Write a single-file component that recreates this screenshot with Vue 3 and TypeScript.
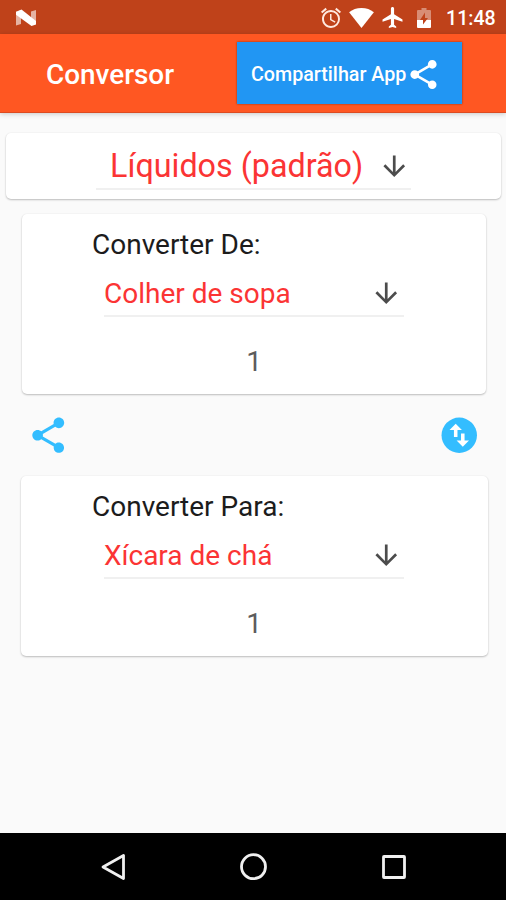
<script setup lang="ts">
import { ref } from 'vue'

interface Panel {
  id: string
  label: string
  unit: string
  value: string
}

const title = 'Conversor'
const category = 'Líquidos (padrão)'
const source = ref<Panel>({ id: 'from', label: 'Converter De:', unit: 'Colher de sopa', value: '1' })
const target = ref<Panel>({ id: 'to', label: 'Converter Para:', unit: 'Xícara de chá', value: '1' })

const sharePath =
  'M18 16.08c-.76 0-1.44.3-1.96.77L8.91 12.7c.05-.23.09-.46.09-.7s-.04-.47-.09-.7l7.05-4.11c.54.5 1.25.81 2.04.81 1.66 0 3-1.34 3-3s-1.34-3-3-3-3 1.34-3 3c0 .24.04.47.09.7L8.04 9.81C7.5 9.31 6.79 9 6 9c-1.66 0-3 1.34-3 3s1.34 3 3 3c.79 0 1.5-.31 2.04-.81l7.12 4.16c-.05.21-.08.43-.08.65 0 1.61 1.31 2.92 2.92 2.92s2.92-1.31 2.92-2.92-1.31-2.92-2.92-2.92z'
const arrowPath = 'M20 12l-1.41-1.41L13 16.17V4h-2v12.17l-5.58-5.59L4 12l8 8 8-8z'

function swap(): void {
  const unit = source.value.unit
  source.value.unit = target.value.unit
  target.value.unit = unit
}
</script>

<template>
  <div class="screen">
    <div class="status">
      <svg class="nougat" viewBox="0 0 22 18">
        <path d="M1 2.500L6 1v14L1 16.500zM16 2.500L21 1v14l-5 1.500z" fill="#fff" fill-opacity=".6" />
        <path d="M1 3L6.500 .5 21 12v3.500l-4.500 1.500L1 5.800z" fill="#fff" />
      </svg>
      <span class="spacer"></span>
      <svg class="alarm" viewBox="0 0 24 24">
        <path fill="#ffe9e0" d="M22 5.720l-4.600-3.860-1.290 1.530 4.600 3.860L22 5.720zM7.880 3.390L6.600 1.860 2 5.710l1.290 1.530 4.590-3.850zM12.500 8H11v6l4.750 2.850.750-1.230-4-2.370V8zM12 4c-4.970 0-9 4.030-9 9s4.020 9 9 9a9 9 0 0 0 0-18zm0 16c-3.870 0-7-3.130-7-7s3.130-7 7-7 7 3.130 7 7-3.130 7-7 7z" />
      </svg>
      <svg class="wifi" viewBox="0 0 26 21">
        <path fill="#fff" d="M13 21L0 4.500C3.500 1.600 8 0 13 0s9.500 1.600 13 4.500z" />
      </svg>
      <svg class="plane" viewBox="0 0 20 20">
        <path fill="#fff" d="M19.500 14v-2l-8-5V1.500C11.500.67 10.830 0 10 0S8.500.67 8.500 1.500V7l-8 5v2l8-2.500V17l-2 1.500V20l3.500-1 3.500 1v-1.500l-2-1.500v-5.500z" />
      </svg>
      <svg class="battery" viewBox="0 0 14 20">
        <path fill="#fff" fill-opacity=".4" d="M4.500 0h5v2H13a1 1 0 0 1 1 1v9H0V3a1 1 0 0 1 1-1h3.500z" />
        <path fill="#fff" d="M0 12h14v7a1 1 0 0 1-1 1H1a1 1 0 0 1-1-1z" />
        <path fill="#bf421a" d="M8 4.500V10h3l-5 6.500V12H3z" />
      </svg>
      <span class="clock">11:48</span>
    </div>

    <header class="appbar">
      <h1 class="title">{{ title }}</h1>
      <button class="share-app" type="button">
        <span>Compartilhar App</span>
        <svg viewBox="0 0 24 24"><path fill="#fff" :d="sharePath" /></svg>
      </button>
    </header>

    <main class="content">
      <section class="card category">
        <div class="select">
          <span class="select-text">{{ category }}</span>
          <svg class="arrow" viewBox="0 0 24 24"><path :d="arrowPath" /></svg>
        </div>
      </section>

      <section class="card panel from">
        <div class="label">{{ source.label }}</div>
        <div class="select">
          <span class="select-text">{{ source.unit }}</span>
          <svg class="arrow" viewBox="0 0 24 24"><path :d="arrowPath" /></svg>
        </div>
        <div class="value">{{ source.value }}</div>
      </section>

      <div class="actions">
        <svg class="action" viewBox="0 0 24 24"><path :d="sharePath" /></svg>
        <svg class="action" viewBox="0 0 24 24" @click="swap">
          <circle cx="12" cy="12" r="10" />
          <path class="swap" d="M6.500 9L10 5.500 13.500 9H11v4H9V9zM17.500 15L14 18.500 10.500 15H13v-4h2v4z" />
        </svg>
      </div>

      <section class="card panel to">
        <div class="label">{{ target.label }}</div>
        <div class="select">
          <span class="select-text">{{ target.unit }}</span>
          <svg class="arrow" viewBox="0 0 24 24"><path :d="arrowPath" /></svg>
        </div>
        <div class="value">{{ target.value }}</div>
      </section>
    </main>

    <nav class="navbar">
      <svg viewBox="0 0 30 30"><path d="M25.500 3.500v23L5 15z" /></svg>
      <svg viewBox="0 0 30 30"><circle cx="14.500" cy="14.700" r="12" /></svg>
      <svg viewBox="0 0 30 30"><rect x="4.500" y="4.500" width="21" height="21" rx=".5" /></svg>
    </nav>
  </div>
</template>

<style>
body {
  margin: 0;
}
</style>

<style scoped>
.screen {
  width: 506px;
  height: 900px;
  display: flex;
  flex-direction: column;
  overflow: hidden;
  background: #fafafa;
  font-family: Roboto, sans-serif;
}
svg {
  display: block;
  flex: none;
}
.status {
  height: 34px;
  flex: none;
  box-sizing: border-box;
  display: flex;
  align-items: center;
  padding: 1px 11px 0 15px;
  background: #bf421a;
}
.nougat {
  width: 22px;
  height: 18px;
}
.spacer {
  flex: 1;
}
.alarm {
  width: 24px;
  height: 24px;
  margin-right: 6px;
}
.wifi {
  width: 25px;
  height: 20px;
  margin-right: 8px;
}
.plane {
  width: 21px;
  height: 21px;
  margin-right: 14px;
}
.battery {
  width: 14px;
  height: 20px;
  margin-right: 15px;
}
.clock {
  width: 49px;
  font-size: 19.6px;
  font-weight: 500;
  line-height: 34px;
  padding-top: 2px;
  color: #fff;
  white-space: nowrap;
}
.appbar {
  height: 79px;
  flex: none;
  box-sizing: border-box;
  display: flex;
  align-items: flex-start;
  padding: 8px 44px 0 46px;
  background: #ff5722;
  border-bottom: 1px solid #dd4b20;
  box-shadow: 0 1px 5px rgba(0, 0, 0, 0.2);
}
.title {
  flex: 1;
  margin: 0;
  font-size: 27.9px;
  font-weight: 500;
  line-height: 66px;
  color: #fff;
}
.share-app {
  width: 225px;
  height: 62px;
  display: flex;
  align-items: center;
  border: 0;
  padding: 2px 0 0 14px;
  background: #2196f3;
  box-shadow: 0 0 2px rgba(0, 0, 0, 0.45);
  color: #fff;
  font: 500 19.7px/62px Roboto, sans-serif;
  white-space: nowrap;
}
.share-app span {
  width: 155px;
  padding-top: 1px;
}
.share-app svg {
  width: 35px;
  height: 35px;
}
.content {
  flex: 1;
  display: flex;
  flex-direction: column;
  padding-top: 20px;
}
.card {
  box-sizing: border-box;
  background: #fff;
  border-radius: 5px;
  box-shadow: 0 1px 2px rgba(0, 0, 0, 0.24), 0 0 2px rgba(0, 0, 0, 0.06);
}
.category {
  height: 66px;
  margin: 0 5px 0 6px;
  padding: 12px 90px 0 90px;
}
.select {
  box-sizing: border-box;
  display: flex;
  align-items: center;
  justify-content: space-between;
  border-bottom: 2px solid #f0f0f0;
}
.select-text {
  color: #fb3434;
  white-space: nowrap;
}
.arrow {
  width: 32.5px;
  height: 32.5px;
  fill: #4c4c4c;
}
.category .select {
  height: 45px;
  padding: 1px 1px 2px 14px;
}
.category .select-text {
  font-size: 32.3px;
}
.panel {
  height: 180px;
}
.from {
  margin: 15px 20px 0 22px;
  padding: 12px 82px 0 70px;
}
.to {
  margin: 0 18px 0 21px;
  padding: 12px 84px 0 71px;
}
.label {
  font-size: 28px;
  line-height: 37px;
  color: #1c1c1c;
}
.panel .select {
  height: 42px;
  margin: 12px 0 0 12px;
  padding: 0 2px 4px 0;
}
.panel .select-text {
  padding-top: 1px;
  font-size: 28px;
}
.value {
  margin-top: 28px;
  margin-right: -12px;
  text-align: center;
  font-size: 28px;
  line-height: 34px;
  color: #5c5c5c;
}
.actions {
  height: 82px;
  box-sizing: border-box;
  display: flex;
  align-items: center;
  justify-content: space-between;
  padding: 0 26px 0 27px;
}
.action {
  width: 42.5px;
  height: 42.5px;
  fill: #33bdff;
}
.swap {
  fill: #fff;
}
.navbar {
  height: 67px;
  flex: none;
  display: flex;
  align-items: center;
  justify-content: space-between;
  box-sizing: border-box;
  padding: 0 97px 0 98px;
  background: #000;
}
.navbar svg {
  width: 30px;
  height: 30px;
  fill: none;
  stroke: #f0f0f0;
  stroke-width: 2.8;
  stroke-linejoin: round;
}
</style>
